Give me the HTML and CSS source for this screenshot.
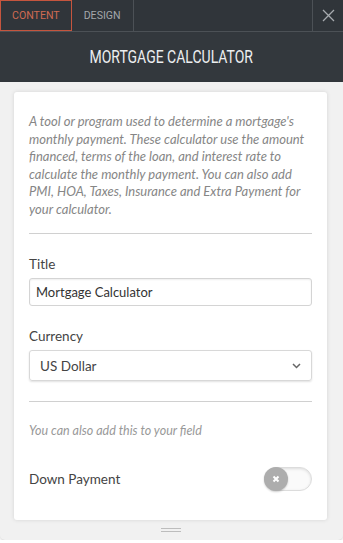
FILE: index.html
```html
<!DOCTYPE html>
<html lang="en">
<head>
    <meta charset="UTF-8">
    <meta name="viewport" content="width=device-width, initial-scale=1.0">
    <title>Mortgage Calculator</title>
    <link rel="stylesheet" href="styles.css">
</head>
<body>
    <!-- Tabs -->
    <nav class="tabs">
        <div class="tab active">CONTENT</div>
        <div class="tab">DESIGN</div>
        <div class="tab-fill"></div>
        <div class="close">
            <svg width="13" height="13" viewBox="0 0 13 13"><path d="M1 1L12 12M12 1L1 12" stroke="#a7abaf" stroke-width="1.3" fill="none"/></svg>
        </div>
    </nav>

    <header class="header"><span class="header-title">MORTGAGE CALCULATOR</span></header>

    <!-- Settings panel -->
    <main class="panel">
        <section class="card">
            <p class="desc">A tool or program used to determine a mortgage's monthly payment. These calculator use the amount financed, terms of the loan, and interest rate to calculate the monthly payment. You can also add PMI, HOA, Taxes, Insurance and Extra Payment for your calculator.</p>

            <hr class="divider">

            <label class="label">Title</label>
            <div class="input">Mortgage Calculator</div>

            <label class="label">Currency</label>
            <div class="select">
                <span>US Dollar</span>
                <svg width="9" height="6" viewBox="0 0 9 6"><path d="M1 1L4.5 4.5L8 1" stroke="#666" stroke-width="1.5" fill="none"/></svg>
            </div>

            <hr class="divider">

            <p class="hint">You can also add this to your field</p>

            <div class="row">
                <span>Down Payment</span>
                <div class="toggle">
                    <div class="knob">
                        <svg width="8" height="8" viewBox="0 0 8 8"><path d="M1.5 1.5L6.5 6.5M6.5 1.5L1.5 6.5" stroke="#fff" stroke-width="2" fill="none"/></svg>
                    </div>
                </div>
            </div>
        </section>
        <div class="handle"><span></span><span></span></div>
    </main>
</body>
</html>
```

FILE: styles.css
```css
body { margin: 0; background: #fff; font-family: Lato, "Noto Sans", sans-serif; color: #333; }

.tabs { display: flex; height: 31px; background: #30353a; border-bottom: 1px solid #4c5156; }
.tab { display: flex; align-items: center; padding: 0 12px; font-family: Roboto, sans-serif; font-size: 10.6px; color: #a3a7ab; border-right: 1px solid #4c5156; }
.tab.active { color: #cf6b52; border: 1px solid #c5553e; padding: 0 11px; }
.tab-fill { flex: 1; }
.close { width: 30px; display: flex; align-items: center; justify-content: center; border-left: 1px solid #4c5156; }

.header { height: 50px; display: flex; align-items: center; justify-content: center; background: #33383d; color: #eceef0; font-family: Roboto, sans-serif; font-size: 17.5px; }
.header-title { display: inline-block; transform: scaleX(0.8); }

.panel { background: #f1f1f1; padding: 10px 16px 0 14px; height: 458px; box-sizing: border-box; border-radius: 0 0 5px 5px; box-shadow: 0 1px 3px rgba(0,0,0,0.18); display: flex; flex-direction: column; }
.card { background: #fff; border-radius: 3px; box-shadow: 0 0 4px rgba(0,0,0,0.12); padding: 21px 15px 0; flex: 1; }

.desc { margin: 0; font-style: italic; font-size: 13px; line-height: 17.5px; color: #868686; }
.divider { border: 0; border-top: 1px solid #d0d0d0; margin: 15px 0 20px; }
.desc + .divider { margin-top: 15px; }

.label { display: block; font-size: 13.5px; line-height: 20px; color: #444; margin-bottom: 4px; }
.input { height: 26px; border: 1px solid #d4d4d4; border-radius: 3px; box-shadow: inset 0 1px 2px rgba(0,0,0,0.07); padding: 0 6px; font-size: 13px; line-height: 26px; color: #333; margin-bottom: 20px; }
.select { height: 29px; border: 1px solid #d8d8d8; border-radius: 3px; box-shadow: 0 1px 2px rgba(0,0,0,0.12); padding: 0 10px 0 10px; display: flex; align-items: center; justify-content: space-between; font-size: 13.5px; color: #444; margin-bottom: 20px; }

.hint { margin: 2px 0 0; font-style: italic; font-size: 12.5px; line-height: 18px; color: #999; }
.row { display: flex; align-items: center; justify-content: space-between; margin-top: 27px; font-size: 13.5px; color: #444; }
.toggle { width: 46px; height: 22px; border: 1px solid #dcdcdc; border-radius: 12px; background: #fafafa; box-shadow: inset 0 1px 3px rgba(0,0,0,0.12); display: flex; align-items: center; }
.knob { width: 24px; height: 24px; margin-left: -1px; border-radius: 50%; background: #adadad; display: flex; align-items: center; justify-content: center; box-shadow: 0 1px 2px rgba(0,0,0,0.2); }

.handle { height: 20px; display: flex; flex-direction: column; align-items: center; justify-content: center; gap: 2px; }
.handle span { width: 20px; height: 1px; background: #bdbdbd; }
```
